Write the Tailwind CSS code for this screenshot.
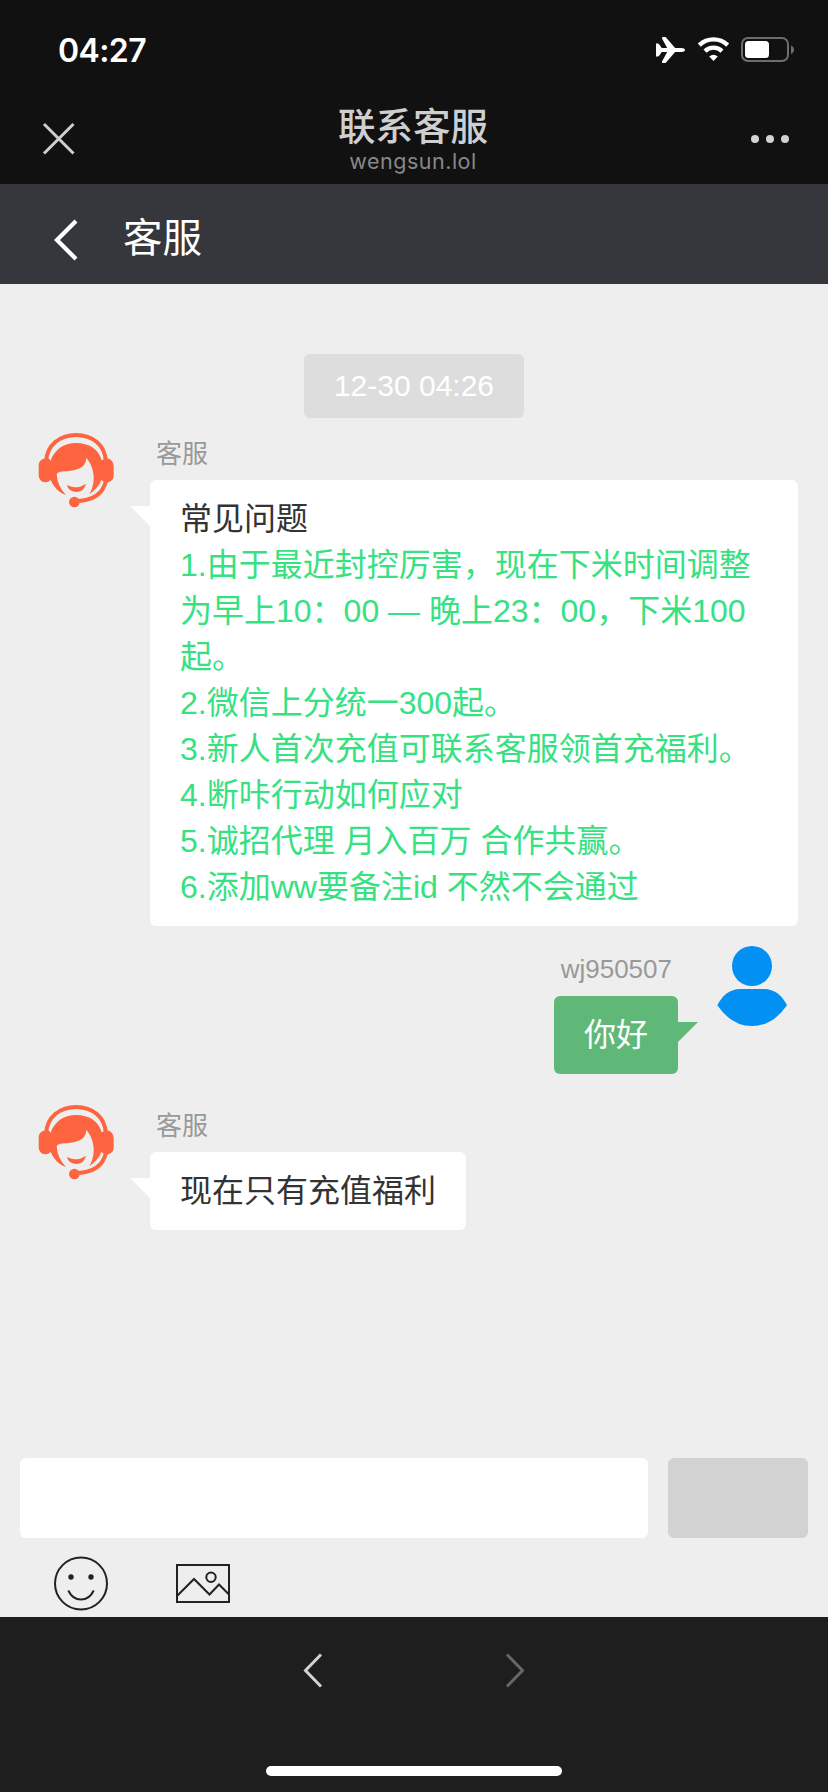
<!DOCTYPE html>
<html lang="zh-CN">
<head>
<meta charset="utf-8">
<title>联系客服</title>
<script src="https://cdn.jsdelivr.net/npm/@tailwindcss/browser@4"></script>
</head>
<body class="w-[828px] h-[1792px] overflow-hidden flex flex-col bg-[#eeeeee] font-['Liberation_Sans','Noto_Sans_CJK_SC',sans-serif]">

<svg class="hidden">
  <symbol id="agent" viewBox="33 30 240 240">
    <g fill="none" stroke="#ff6440" stroke-width="12">
      <path d="M64 122C66 76 104 45 153 45C203 45 240 76 242 122"/>
      <path d="M244 178C236 220 206 243 150 243"/>
    </g>
    <g fill="#ff6440">
      <path d="M72 116Q57 112 46 122Q41 126 41 140V165Q42 186 60 187Q70 187 77 180Q92 215 123 225Q96 197 95 162Q97 157 106 155C145 152 183 150 184 113C205 138 217 181 193 223Q219 205 229 180Q238 189 251 186Q266 182 266 165V138Q265 118 245 115L230 121C222 88 192 69 153 69C115 69 88 90 77 122Z"/>
      <path d="M126 195Q155 211 183 191Q178 215 153 216Q130 214 126 195Z"/>
      <circle cx="148" cy="246" r="16"/>
    </g>
  </symbol>
</svg>

<header class="h-[184px] shrink-0 bg-[#111111]">
  <div class="h-24 flex items-center justify-between pl-[58px] pr-[34px] pt-1">
    <span class="font-['Inter'] font-semibold text-[32px] leading-none tracking-[-0.6px] text-white mt-[2px]">04:27</span>
    <svg class="w-[140px] h-[30px]" viewBox="654 35 140 30">
      <path fill="#fff" d="M656 43.500h1.800q.8 0 1.300.8l2.700 3.700h5.400L662 38.500q-.5-1.500 1-1.500h1.800q1 0 1.700.9l8.600 10.100h6.600q3.300.4 3.300 2t-3.300 2h-6.600l-8.600 10.100q-.7.9-1.700.9H663q-1.500 0-1-1.500l5.200-9.500h-5.400l-2.700 3.700q-.5.8-1.300.8H656z"/>
      <g fill="none" stroke="#fff" stroke-width="4.300">
        <path d="M699.300 45.100A20.500 20.500 0 0 1 727.700 45.100"/>
        <path d="M705 51.100A12.300 12.300 0 0 1 722 51.100"/>
      </g>
      <path fill="#fff" d="M709.200 56.400q4.300-3.400 8.600 0l-4.300 4.600z"/>
      <rect x="742" y="38" width="46" height="23" rx="6" fill="none" stroke="#6d6d6d" stroke-width="2"/>
      <rect x="745" y="41" width="24" height="17" rx="3.500" fill="#fff"/>
      <path fill="#6d6d6d" d="M791 45.500q3 1.200 3 4.200t-3 4.200z"/>
    </svg>
  </div>
  <div class="h-[88px] flex items-center justify-between pl-[42px] pr-[38px] pb-[2px]">
    <svg class="w-[34px] h-[34px] mt-[-2px]" viewBox="0 0 34 34" fill="none" stroke="#cfcfcf" stroke-width="3"><path d="M2 3L31.500 32.500M31.500 3L2 32.500"/></svg>
    <div class="flex flex-col items-center">
      <h1 class="text-[37.5px] leading-[44px] font-medium text-[#cfcfcf]">联系客服</h1>
      <p class="font-['Inter'] text-[21.5px] leading-6 tracking-[0.5px] text-[#888888]">wengsun.lol</p>
    </div>
    <svg class="w-[40px] h-[8px]" viewBox="0 0 40 8" fill="#d2d2d2"><circle cx="5" cy="4" r="4"/><circle cx="20" cy="4" r="4"/><circle cx="35" cy="4" r="4"/></svg>
  </div>
</header>

<nav class="h-[100px] shrink-0 bg-[#36373c] flex items-center pl-[52px] gap-11">
  <svg class="w-[27px] h-[42px] mt-3" viewBox="0 0 27 42" fill="none" stroke="#fff" stroke-width="4.200"><path d="M24 2L5 21L24 40"/></svg>
  <span class="text-[39.5px] leading-none text-white mt-[9px]">客服</span>
</nav>

<main class="h-[1164px] shrink-0 flex flex-col pt-[70px] pl-9 pr-[30px]">
  <time class="self-center ml-[-6px] h-16 px-[30px] flex items-center rounded-md bg-[#dddddd] text-[30px] leading-none text-white whitespace-nowrap">12-30 04:26</time>

  <section class="mt-3 flex gap-[34px]">
    <svg class="size-20 shrink-0"><use href="#agent"/></svg>
    <div class="w-[648px]">
      <p class="h-[50px] pl-1.5 pt-1 text-[26px] leading-[40px] text-[#999999]">客服</p>
      <div class="relative rounded-md bg-white px-[30px] py-4 text-[32px] leading-[46px] text-[#333333] whitespace-nowrap">
        <svg class="absolute left-[-20px] top-[26px] w-5 h-5" viewBox="0 0 20 20"><path d="M0 0H20V20Z" fill="#fff"/></svg>
        <p>常见问题</p>
        <div class="text-[#36e182]">
          <p>1.由于最近封控厉害，现在下米时间调整<br>为早上10：00 — 晚上23：00，下米100<br>起。</p>
          <p>2.微信上分统一300起。</p>
          <p>3.新人首次充值可联系客服领首充福利。</p>
          <p>4.断咔行动如何应对</p>
          <p>5.诚招代理 月入百万 合作共赢。</p>
          <p>6.添加ww要备注id 不然不会通过</p>
        </div>
      </div>
    </div>
  </section>

  <section class="mt-5 mr-1.5 flex justify-end gap-[34px]">
    <div class="flex flex-col items-end">
      <p class="h-[50px] pr-1.5 pt-[3px] text-[26px] leading-[40px] text-[#999999]">wj950507</p>
      <div class="relative rounded-md bg-[#5fb878] px-[30px] py-4 text-[32px] leading-[46px] text-white">
        <svg class="absolute right-[-20px] top-[26px] w-5 h-5" viewBox="0 0 20 20"><path d="M0 0H20L0 20Z" fill="#5fb878"/></svg>
        你好
      </div>
    </div>
    <svg class="size-20 shrink-0" viewBox="576 138 240 240" fill="#0390f3"><circle cx="696" cy="198" r="60"/><path d="M660 267H733Q777 268 801 316Q758 378 696 378Q634 378 592 316Q616 268 660 267Z"/></svg>
  </section>

  <section class="mt-7 flex gap-[34px]">
    <svg class="size-20 shrink-0"><use href="#agent"/></svg>
    <div>
      <p class="h-[50px] pl-1.5 pt-1 text-[26px] leading-[40px] text-[#999999]">客服</p>
      <div class="relative rounded-md bg-white px-[30px] py-4 text-[32px] leading-[46px] text-[#333333] whitespace-nowrap">
        <svg class="absolute left-[-20px] top-[26px] w-5 h-5" viewBox="0 0 20 20"><path d="M0 0H20V20Z" fill="#fff"/></svg>
        现在只有充值福利
      </div>
    </div>
  </section>
</main>

<div class="h-[169px] shrink-0 px-5 pt-[10px]">
  <div class="flex gap-5 h-20">
    <div class="w-[628px] rounded-md bg-white"></div>
    <div class="w-[140px] rounded-md bg-[#d2d2d2]"></div>
  </div>
  <div class="flex items-center gap-[66px] pl-[33px] pt-[18px]">
    <svg class="size-14" viewBox="53 1555.500 56 56" fill="none" stroke="#222" stroke-width="2">
      <circle cx="81" cy="1583" r="26"/><path d="M68.300 1590Q72.500 1599 81 1599T93.700 1590"/>
      <g fill="#222" stroke="none"><circle cx="71" cy="1576.500" r="2.700"/><circle cx="91" cy="1576.500" r="2.700"/></g>
    </svg>
    <svg class="size-14" viewBox="175 1555.500 56 56" fill="none" stroke="#222" stroke-width="2">
      <path d="M177 1564.500H229V1601.500H177ZM177 1595.500L194 1578.500L209.500 1594L219 1584L229 1594"/><circle cx="211" cy="1576.800" r="4.700"/>
    </svg>
  </div>
</div>

<footer class="h-[175px] shrink-0 bg-[#1e1e1e] flex flex-col items-center justify-between pt-9 pb-4">
  <div class="flex gap-[182px]">
    <svg class="w-5 h-[35px]" viewBox="303 1653 20 35" fill="none" stroke="#d2d2d2" stroke-width="3"><path d="M321 1654.500L305.500 1670.500L321 1686.500"/></svg>
    <svg class="w-5 h-[35px]" viewBox="505 1653 20 35" fill="none" stroke="#676767" stroke-width="3"><path d="M507 1654.500L522.500 1670.500L507 1686.500"/></svg>
  </div>
  <div class="w-[296px] h-[10px] rounded-full bg-white"></div>
</footer>
</body>
</html>
